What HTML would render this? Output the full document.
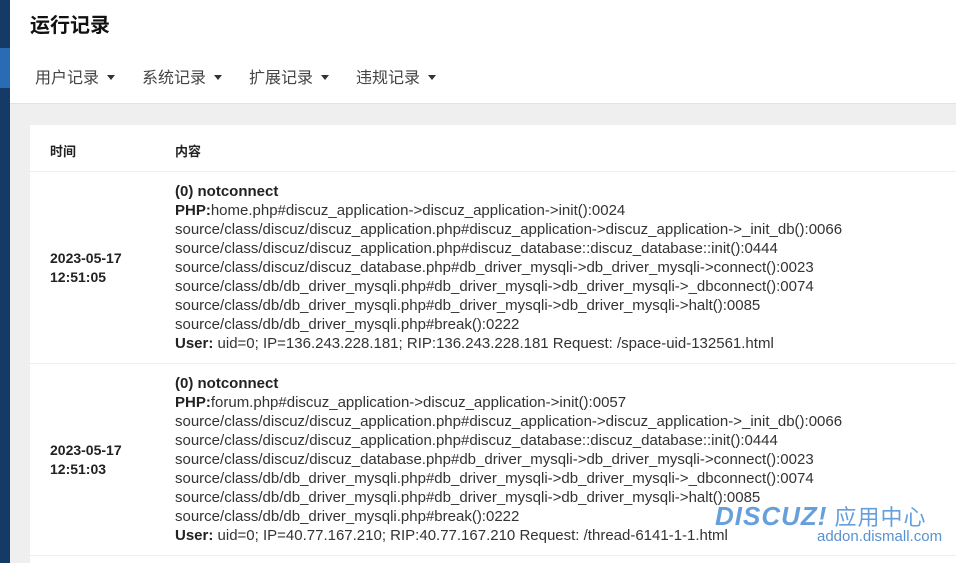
<!DOCTYPE html>
<html><head><meta charset="utf-8"><style>
*{margin:0;padding:0;box-sizing:border-box}
html,body{width:956px;height:563px;overflow:hidden}
body{background:#efefef;font-family:"Liberation Sans","Noto Sans CJK SC",sans-serif;color:#333;position:relative}
.side{position:absolute;left:0;top:0;width:10px;height:563px;background:#163a66}
.side i{position:absolute;left:0;top:48px;width:10px;height:40px;background:#2a6cb3}
.head{position:absolute;left:10px;top:0;right:0;height:104px;background:#fff;border-bottom:1px solid #e3e3e3}
h1{position:absolute;left:20px;top:9px;font-size:20px;font-weight:bold;color:#111}
.nav{position:absolute;left:25px;top:64px;font-size:16px;color:#444}
.nav span{display:inline-block;width:107px}
.nav b{display:inline-block;width:0;height:0;border-left:4.5px solid transparent;border-right:4.5px solid transparent;border-top:5px solid #333;margin-left:8px;vertical-align:3px}
.card{position:absolute;left:30px;top:125px;right:0;height:438px;background:#fff}
.th{position:absolute;top:16px;font-size:13px;font-weight:bold;color:#222}
.row{position:absolute;left:0;right:0;border-top:1px solid #eee}
.t{position:absolute;left:20px;font-size:14px;font-weight:bold;line-height:19px;color:#222}
.c{position:absolute;left:145px;top:10px;font-size:15px;line-height:19px;white-space:nowrap;color:#333}
.c b{color:#222}
.wm{position:absolute;left:715px;top:500px;color:#4b8fd6;opacity:.85}
</style></head><body>
<div class="side"><i></i></div>
<div class="head"><h1>运行记录</h1>
<div class="nav"><span>用户记录<b></b></span><span>系统记录<b></b></span><span>扩展记录<b></b></span><span>违规记录<b></b></span></div></div>
<div class="card">
<div class="th" style="left:20px">时间</div><div class="th" style="left:145px">内容</div>
<div class="row" style="top:46px;height:192px">
<div class="t" style="top:77px">2023-05-17<br>12:51:05</div>
<div class="c"><b>(0) notconnect</b><br><b>PHP:</b>home.php#discuz_application-&gt;discuz_application-&gt;init():0024<br>source/class/discuz/discuz_application.php#discuz_application-&gt;discuz_application-&gt;_init_db():0066<br>source/class/discuz/discuz_application.php#discuz_database::discuz_database::init():0444<br>source/class/discuz/discuz_database.php#db_driver_mysqli-&gt;db_driver_mysqli-&gt;connect():0023<br>source/class/db/db_driver_mysqli.php#db_driver_mysqli-&gt;db_driver_mysqli-&gt;_dbconnect():0074<br>source/class/db/db_driver_mysqli.php#db_driver_mysqli-&gt;db_driver_mysqli-&gt;halt():0085<br>source/class/db/db_driver_mysqli.php#break():0222<br><b>User:</b> uid=0; IP=136.243.228.181; RIP:136.243.228.181 Request: /space-uid-132561.html</div></div>
<div class="row" style="top:238px;height:192px">
<div class="t" style="top:77px">2023-05-17<br>12:51:03</div>
<div class="c"><b>(0) notconnect</b><br><b>PHP:</b>forum.php#discuz_application-&gt;discuz_application-&gt;init():0057<br>source/class/discuz/discuz_application.php#discuz_application-&gt;discuz_application-&gt;_init_db():0066<br>source/class/discuz/discuz_application.php#discuz_database::discuz_database::init():0444<br>source/class/discuz/discuz_database.php#db_driver_mysqli-&gt;db_driver_mysqli-&gt;connect():0023<br>source/class/db/db_driver_mysqli.php#db_driver_mysqli-&gt;db_driver_mysqli-&gt;_dbconnect():0074<br>source/class/db/db_driver_mysqli.php#db_driver_mysqli-&gt;db_driver_mysqli-&gt;halt():0085<br>source/class/db/db_driver_mysqli.php#break():0222<br><b>User:</b> uid=0; IP=40.77.167.210; RIP:40.77.167.210 Request: /thread-6141-1-1.html</div></div>
<div class="row" style="top:430px;height:20px"></div>
</div>
<div class="wm"><div style="font-size:26px;font-weight:bold;font-style:italic;letter-spacing:1px">DISCUZ!<span style="font-style:normal;font-weight:normal;font-size:22px"> 应用中心</span></div><div style="font-size:15px;color:#3a7fc8;margin-left:102px;margin-top:-4px">addon.dismall.com</div></div>
</body></html>
